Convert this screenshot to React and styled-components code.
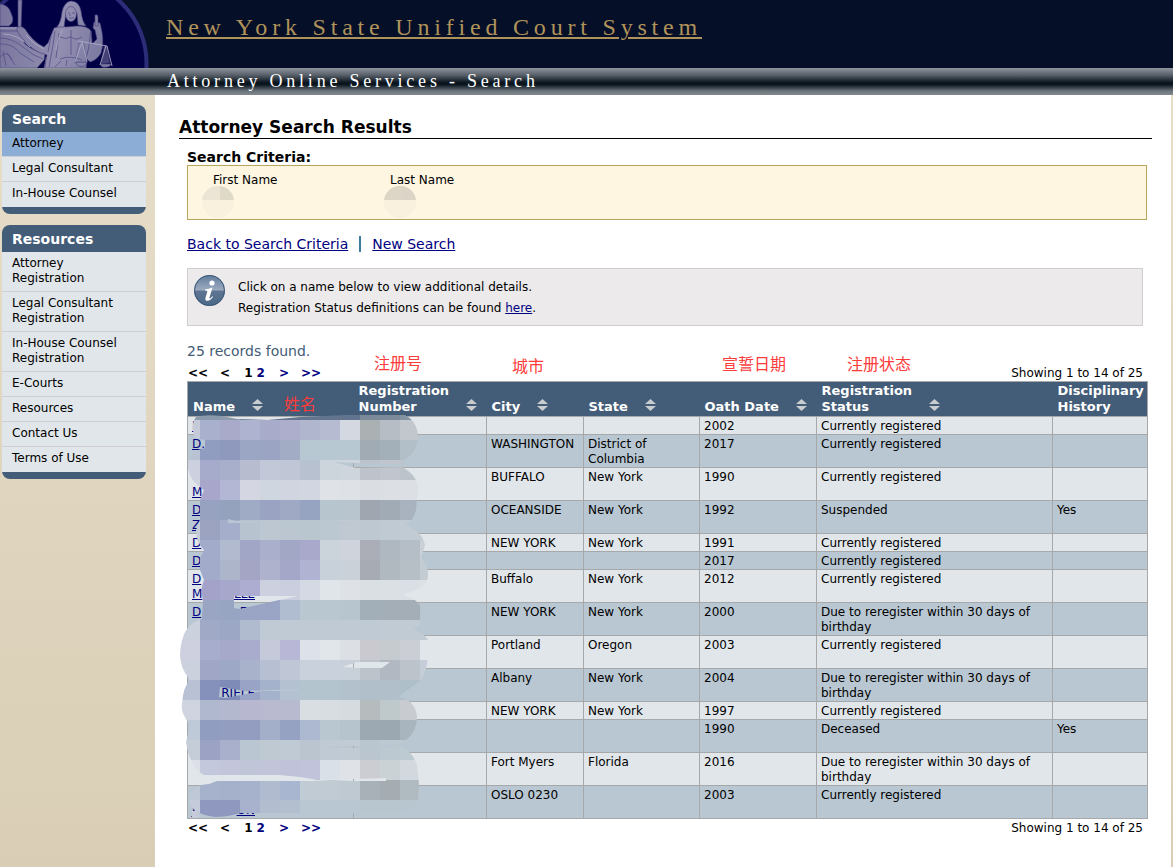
import React from 'react';
import styled, { createGlobalStyle } from 'styled-components';

const Global = createGlobalStyle`
  * { box-sizing: border-box; }
  body {
    margin: 0;
    background: linear-gradient(#e8dfcc, #d9ceb5);
    color: #000;
    font: 12px/15px "DejaVu Sans", sans-serif;
  }
  h1, h2, p, ul { margin: 0; padding: 0; }
  a { color: #000080; }
`;

const Page = styled.div`
  min-height: 100vh;
  display: flex;
  flex-direction: column;
`;
const Banner = styled.header`
  display: flex;
  align-items: flex-start;
  height: 68px;
  background: #050f28;
`;
const Seal = styled.svg`
  width: 150px;
  height: 68px;
  flex: none;
`;
const SiteTitle = styled.a`
  margin: 13px 0 0 16px;
  font: 24px/28px "Liberation Serif", serif;
  letter-spacing: 0.2em;
  color: #b0935a;
  text-decoration-thickness: 2px;
  text-underline-offset: 2px;
`;
const SubBanner = styled.div`
  height: 27px;
  padding-left: 167px;
  background: linear-gradient(#90959e 0, #5b626b 25%, #08131d 55%, #0c1720 62%, #6b737b 85%, #838a90 100%);
  color: #fff;
  font: 18px/27px "Liberation Serif", serif;
  letter-spacing: 0.21em;
`;
const Body = styled.div`
  flex: 1;
  display: flex;
  padding-right: 2px;
`;
const Sidebar = styled.nav`
  width: 155px;
  flex: none;
  padding: 10px 9px 0 2px;
  display: flex;
  flex-direction: column;
  gap: 11px;
`;
const Panel = styled.section`
  border-radius: 8px;
  overflow: hidden;
  background: #435c77;
  padding-bottom: 7px;
`;
const PanelTitle = styled.h2`
  padding: 1px 0 0 10px;
  color: #fff;
  font-size: 14px;
  line-height: 26px;
`;
const PanelList = styled.ul`
  list-style: none;
`;
const PanelLink = styled.a`
  display: block;
  padding: 4px 20px 5px 10px;
  border-bottom: 1px solid #d2cfd2;
  background: ${p => (p.$active ? '#8cadd5' : '#e1e6ea')};
  color: #000;
  text-decoration: none;
  li:last-child > & { border-bottom-color: #e1e6ea; }
`;
const Main = styled.main`
  flex: 1;
  min-width: 0;
  background: #fff;
  padding: 21px 19px 30px 24px;
`;
const Heading = styled.h1`
  padding-top: 1px;
  border-bottom: 1px solid #000;
  font-size: 17px;
  line-height: 21px;
`;
const Content = styled.div`
  padding: 11px 4px 0 8px;
`;
const CriteriaTitle = styled.h2`
  font-size: 14px;
  line-height: 15px;
`;
const Criteria = styled.div`
  display: grid;
  grid-template-columns: 177px 1fr;
  height: 55px;
  margin-right: 1px;
  padding: 7px 25px;
  border: 1px solid #b9a55c;
  background: #fff6e2;
`;
const Field = styled.div`
  position: relative;
`;
const Smudge = styled.svg`
  position: absolute;
  top: 13px;
  left: ${p => p.$left}px;
`;
const Links = styled.div`
  display: flex;
  align-items: center;
  gap: 11px;
  padding: 15px 0;
  font-size: 14px;
  line-height: 18px;
`;
const Divider = styled.span`
  width: 2px;
  height: 16px;
  background: #3c7c9c;
`;
const Notice = styled.div`
  display: flex;
  gap: 12px;
  height: 58px;
  margin-right: 5px;
  padding: 6px;
  border: 1px solid #d0cdd0;
  background: #eceaeb;
  line-height: 21px;
`;
const NoticeText = styled.div`
  padding-top: 2px;
`;
const Results = styled.section`
  position: relative;
  padding-top: 16px;
`;
const Count = styled.p`
  margin-bottom: 2px;
  color: #435c77;
  font-size: 14px;
  line-height: 18px;
`;
const PagerRow = styled.div`
  display: flex;
  justify-content: space-between;
  padding: ${p => (p.$below ? 2 : 4)}px 5px 0 1px;
`;
const Pager = styled.div`
  display: flex;
  gap: 12px;
  font-weight: bold;
  a { text-decoration: none; }
`;
const Numbers = styled.span`
  display: flex;
  gap: 4px;
  padding: 0 2px;
`;
const Grid = styled.table`
  width: 100%;
  table-layout: fixed;
  border-collapse: collapse;
  border: 1px solid #a6a8aa;
`;
const Th = styled.th`
  padding: 1px 0 1px 5px;
  background: #435c77;
  color: #fff;
  font-size: 13px;
  line-height: 16px;
  text-align: left;
  vertical-align: bottom;
`;
const SortButton = styled.button`
  display: flex;
  align-items: flex-end;
  gap: 17px;
  padding: 0;
  border: 0;
  background: none;
  color: inherit;
  font: inherit;
  text-align: left;
  svg { flex: none; margin-bottom: 4px; }
`;
const Row = styled.tr`
  background: ${p => (p.$dark ? '#b9c7d2' : '#e1e6ea')};
`;
const Td = styled.td`
  height: ${p => (p.$tall ? 33 : 18)}px;
  padding: 2px 4px 0;
  border: 1px solid #a6a8aa;
  vertical-align: top;
`;
const Name = styled.a`
  display: flex;
  justify-content: space-between;
  width: 63px;
  height: 15px;
`;
const TableWrap = styled.div`
  position: relative;
`;
const Mosaic = styled.svg`
  position: absolute;
  left: -7px;
  top: 19px;
  pointer-events: none;
`;
const Note = styled.span`
  position: absolute;
  left: ${p => p.$x}px;
  top: ${p => p.$y}px;
  color: #fc3b3b;
  font: 16px/20px "Noto Sans CJK SC", sans-serif;
`;

const searchLinks = ['Attorney', 'Legal Consultant', 'In-House Counsel'];
const resourceLinks = ['Attorney Registration', 'Legal Consultant Registration', 'In-House Counsel Registration', 'E-Courts', 'Resources', 'Contact Us', 'Terms of Use'];

const due = 'Due to reregister within 30 days of birthday';
const cur = 'Currently registered';
const NY = 'New York';
/* name lines, city, state, oath year, status, history, two-line row */
const rows = [
  [[['D']], '', '', '2002', cur, '', false],
  [[['D.']], 'WASHINGTON', 'District of Columbia', '2017', cur, '', true],
  [[[], ['M.']], 'BUFFALO', NY, '1990', cur, '', true],
  [[['D'], ['Z']], 'OCEANSIDE', NY, '1992', 'Suspended', 'Yes', true],
  [[['D']], 'NEW YORK', NY, '1991', cur, '', false],
  [[['D']], '', '', '2017', cur, '', false],
  [[['D'], ['M', 'ELLE']], 'Buffalo', NY, '2012', cur, '', true],
  [[['D', 'EE']], 'NEW YORK', NY, '2000', due, '', true],
  [[], 'Portland', 'Oregon', '2003', cur, '', true],
  [[[], ['', 'RIELE']], 'Albany', NY, '2004', due, '', true],
  [[], 'NEW YORK', NY, '1997', cur, '', false],
  [[], '', '', '1990', 'Deceased', 'Yes', true],
  [[], 'Fort Myers', 'Florida', '2016', due, '', true],
  [[[], ['J', 'ON']], 'OSLO 0230', '', '2003', cur, '', true],
];
const columns = [['Name', 166, true], ['Registration Number', 133, true], ['City', 97, true], ['State', 116, true], ['Oath Date', 117, true], ['Registration Status', 236, true], ['Disciplinary History', 95, false]];

/* one string per 20px band, thirteen 20px cells in each */
const cells = [
  '8b9bab 8998ab 8b9aab 66788f 62748e 62748e 62748e 62748e 62748e 7d8a99 7d8a99 8594a3 8594a3',
  'c5cad8 a9b0cd a9a9c9 aeb3d0 a9abca adadcc b1b6cf b7bbd1 d3d8e1 abb0b3 b6bdc4 c2c7cd c2c7cd',
  'b9c2d2 909cc0 8e99bd 9aa6c3 9ba4c3 a2adc5 b8c8d3 b8c8d3 b8c8d3 a0abb3 a3afb9 b2bec8 b2bec8',
  'cdd1df a6abcb a8afcb b7bccf c2c8d7 c1c6d6 b8c1d0 ccd4dc cfd5dd bec2cb c1c5cd bcc3cb bcc3cb',
  'd0d4df a8a6ca b3b7d4 d4d7e1 d0d6e0 d1d5e0 d2d6e1 dfe3e7 dee2e6 dadde1 dcdfe3 dce0e4 dce0e4',
  'b4bfd2 96a2c0 95a2be 9fabc5 9aa3c2 9fa9c4 96a4c2 b7c5cf b8c5cf 9fa6b0 a0abb5 a9b3bf a9b3bf',
  'c6cdd8 9ca3c1 a5aecb b7c3cf bdc7d1 bbc6d0 b9c5cf bcc8d1 c0c9d2 bdc8d0 bfcad2 c1cbd3 c1cbd3',
  'c4ccd8 a3abca b1bace a2a6c6 aaafcc a1a7c5 a8a9cb cbd3db cfd4dc abaeb6 afb7c0 b5bdc6 c9d0d8',
  'c4ccd8 a2abc9 adb5cb a4a5c5 afb2cd a5a7c9 b0b3d1 c8d0d9 cbd1d9 a7abb4 b0b8c0 b6bec6 c3cbd3',
  'c8c8dc a4a2c9 a7a7cb acadd0 ccd0df cbcedf d4d9e3 e0e5e9 dee2e6 dadfe3 dbe0e5 d9dfe4 dce1e6',
  'b5c0d0 99a5c2 98a5c2 9aa5c6 9aa5c6 b0bccf b9c7d1 b9c7d1 b7c5cf a3afb8 a3aeb7 a3aeb7 b7c5cf',
  'cbd1dd a0a9c5 9ba7c4 b0bbcf c0cad4 c0cad4 c0cad4 c0cad4 c0cad4 c0cad4 c0cbd4 c0cbd4 c0cbd4',
  'cfd0df a7aecd a7a9cb aaaccd c5c9da b8b8d6 dde1e9 e0e6ea dce0e4 cac9cf c6cbcf cbcfd5 e1e6ea',
  'cbd2dd 9fa6c6 9da8c6 a9b2cb b6c0d2 bfc6d5 c8d1dc c8d1dc c8d0da bdc3ca b2b8c1 bcc3cb c5ced8',
  'b9c1d5 8590bb 7e8bb7 98a3c6 a5b2cc b3c1d0 b4c4cf b4c4cf b3c1cc b0bfc9 b0bfc9 afbfc9 afbfc9',
  'd0d3e0 b0b8cf b4b8ce b7b8cf b9bacf b8bbd0 d9dee3 d8dde1 d5dbde b6bbbd bfc9cb c8ccd1 c8ccd1',
  'bfcad8 909dc0 929dbf 929dbf a3afc9 95a2c2 adb9d0 b9c7d0 b6c4cd 9ca9b3 9ba8b2 a8b4be a8b4be',
  'c5cdd9 9ba2c4 a8b0cb bac6d1 bec9d2 c0cad5 bac5d0 c0cad4 c1cbd4 bac5cf bdc9d1 bdcad1 bdcad1',
  'dcdfe8 c4c8dc c3c6db c0c5d8 c2c5d9 bfc2d8 c0c3d9 dae0e8 dfe3e8 cccdd2 cad2d6 d2d8dd d2d8dd',
  'bec8d6 a6b1cc a5b0cb a6b1cb b0bbcf a9b6cf c0cbd3 c0cbd3 bec9d2 a8b0b8 a5adb3 b0bac1 b0bac1',
  'c5cbda 8f99bf 8f99bf a8b2cd b2bdcf b3becf b8c7d1 b8c7d1 b8c7d1 b8c6d0 b8c6d0 b8c6d0 b8c6d0',
].map(r => r.split(' '));

const blob = 'M196 417 Q205 414 222 416 L237 419 268 420 300 417 345 415 405 415 Q418 422 418 438 Q416 454 404 460 L402 467 Q417 475 418 488 L416 510 Q413 522 405 525 Q422 531 425 545 L421 558 Q428 565 428 576 Q427 584 421 588 L403 595 Q422 600 423 614 Q422 626 413 629 Q424 633 428 640 L428 655 Q427 673 420 681 L398 697 Q415 700 417 716 Q417 732 406 740 L395 744 Q411 748 417 765 L419 785 Q418 798 418 801 Q412 812 395 813 L240 813 Q228 817 215 817 Q190 814 189 799 Q190 785 209 784 L217 781 313 781 350 780 318 780 300 777 280 775 204 775 Q190 768 186 742 L190 725 Q180 712 182 704 Q183 687 190 680 Q180 668 180 655 Q181 624 202 619 L203 600 201 590 204 580 200 570 200 558 204 550 Q196 542 196 530 L200 520 200 500 204 490 Q188 480 188 465 Q188 451 205 448 L205 440 195 438 Q190 425 196 417 Z';
const holes = 'M334 462 L358 463 398 464 408 467 356 468 Z M228 519 L236 521 340 522 354 524 236 523 228 523 Z M234 596 L298 596 270 602 240 609 234 608 Z M342 667 L357 662 390 662 382 668 357 668 Z M220 687 L245 691 298 689 298 691 262 691 225 698 219 697 Z M288 746 L320 747 395 745 396 748 340 748 Z M313 780 L356 779 386 778 386 781 356 781 Z M192 811 L199 811 199 818 192 818 Z';

function SortIcon() {
  return (
    <svg width="11" height="12" viewBox="0 0 11 12" aria-hidden="true">
      <path d="M5.500 0L11 5H0zM0 7H11L5.500 12z" fill="#c9cccf" />
    </svg>
  );
}

function SealArt() {
  return (
    <Seal viewBox="0 0 150 68" role="img" aria-label="Court seal">
      <defs>
        <linearGradient id="stone" gradientUnits="userSpaceOnUse" x1="0" x2="110" y1="0" y2="20">
          <stop offset="0" stopColor="#77739c" /><stop offset=".6" stopColor="#918eb0" /><stop offset="1" stopColor="#7b78a0" />
        </linearGradient>
      </defs>
      <circle cx="62" cy="63" r="86" fill="#020045" />
      <circle cx="62" cy="63" r="84.500" fill="none" stroke="#2c2c78" strokeWidth="4" />
      <g fill="url(#stone)" stroke="#46427c" strokeWidth=".6">
        <path d="M0 4Q9 5 11 13Q14 19 12 23L9 26H0z" />
        <path d="M18 0H22L21 30H18z" />
        <path d="M0 27H19L20 35 24 36 24 43Q31 50 45 54L44 60 37 68H0z" />
        <path d="M16 29Q20 24 25 29Q33 42 44 47L48 43 54 28Q61 25 66 27L77 26Q88 26 91 31L92 43 88 51 86 68H44L47 55Q32 52 21 37z" />
        <path d="M91 31L92 44 97 39 95 30 93 28 94 22 100 23 102 32Q104 44 101 53Q97 60 90 62L86 58 88 51z" />
        <path d="M57 27Q61 22 62 12Q64 2 71 1Q79 1 81 11Q82 21 86 26L78 25 77 13 66 13 64 27z" />
        <ellipse cx="71" cy="14" rx="5.500" ry="7.500" />
        <path d="M95 15Q98 14 98 17L98 26H95z" />
        <path d="M75 62H87Q86 68 78 66zM100 64H111Q110 68 102 67z" />
        <path d="M104 46H107L110 63 101 64z" opacity=".55" />
        <path d="M79 43L84 43 86 62H75z" opacity=".7" />
      </g>
      <g fill="none" stroke="#55518a" strokeWidth=".8">
        <path d="M0 31H18M0 38Q12 38 23 47Q33 56 43 59M0 44Q12 43 20 53L34 62M3 51L6 66M0 57Q8 49 12 60M7 53L15 65" />
        <path d="M55 31Q53 47 49 67M59 33L56 58M60 59Q70 55 82 60M55 67L61 61M66 66L67 60M60 37Q66 40 71 37Q76 41 82 37M71 30V55" />
        <path d="M68 13H70M72 13H75M69 18H74M70 14V16M51 36L48 52M46 57L45 67" />
      </g>
      <g fill="none" stroke="#aba8c6" strokeWidth=".9">
        <path d="M78 41L107 46M82 42L75 62M82 42L87 62M106 46L100 65M107 46L112 66M0 28H17M3 34Q18 34 30 47M26 35Q34 45 44 49M62 30Q57 40 56 50" />
      </g>
    </Seal>
  );
}

function InfoIcon() {
  return (
    <svg width="32" height="32" viewBox="0 0 32 32" role="img" aria-label="Information">
      <defs>
        <linearGradient id="ball" x1="0" x2="0" y1="0" y2="1">
          <stop offset="0" stopColor="#617c9c" /><stop offset=".47" stopColor="#9aaabf" /><stop offset=".53" stopColor="#5e7592" /><stop offset="1" stopColor="#4c6989" />
        </linearGradient>
      </defs>
      <circle cx="15.500" cy="15.500" r="15.500" fill="url(#ball)" />
      <circle cx="15.500" cy="15.500" r="15" fill="none" stroke="#3c5776" strokeWidth="1" />
      <circle cx="18" cy="8" r="2.600" fill="#fff" />
      <path d="M11 14.500Q15 14 18.500 12.500L15.500 22.500Q15.200 24 16.500 23.200L18.300 21.300 19 22Q16.500 25.700 13.500 25.800Q10.700 25.800 11.500 22.700L13.300 16.700Q13.500 15.500 11 15.500z" fill="#fff" />
    </svg>
  );
}

function HiddenValue({ left, colors }) {
  return (
    <Smudge $left={left} width="32" height="32" viewBox="0 0 32 32" aria-hidden="true">
      <circle cx="16" cy="16" r="16" fill="#f9f0de" />
      <path d="M0 14A16 16 0 0 1 18 0V14z" fill={colors[0]} />
      <path d="M18 0A16 16 0 0 1 32 14H18z" fill={colors[1]} />
    </Smudge>
  );
}

function PanelBlock({ title, links, active }) {
  return (
    <Panel>
      <PanelTitle>{title}</PanelTitle>
      <PanelList>
        {links.map(l => <li key={l}><PanelLink href="#" $active={l === active}>{l}</PanelLink></li>)}
      </PanelList>
    </Panel>
  );
}

function PagerBar({ below }) {
  return (
    <PagerRow $below={below}>
      <Pager>
        <span>&lt;&lt;</span><span>&lt;</span>
        <Numbers><span>1</span><a href="#">2</a></Numbers>
        <a href="#">&gt;</a><a href="#">&gt;&gt;</a>
      </Pager>
      <span>Showing 1 to 14 of 25</span>
    </PagerRow>
  );
}

export default function App() {
  return (
    <Page>
      <Global />
      <Banner>
        <SealArt />
        <SiteTitle href="#">New York State Unified Court System</SiteTitle>
      </Banner>
      <SubBanner>Attorney Online Services - Search</SubBanner>
      <Body>
        <Sidebar>
          <PanelBlock title="Search" links={searchLinks} active="Attorney" />
          <PanelBlock title="Resources" links={resourceLinks} />
        </Sidebar>
        <Main>
          <Heading>Attorney Search Results</Heading>
          <Content>
            <CriteriaTitle>Search Criteria:</CriteriaTitle>
            <Criteria>
              <Field>First Name<HiddenValue left={-11} colors={['#ece4d4', '#dfd9c7']} /></Field>
              <Field>Last Name<HiddenValue left={-6} colors={['#ddd5c5', '#dcd4c6']} /></Field>
            </Criteria>
            <Links>
              <a href="#">Back to Search Criteria</a>
              <Divider />
              <a href="#">New Search</a>
            </Links>
            <Notice>
              <InfoIcon />
              <NoticeText>
                <p>Click on a name below to view additional details.</p>
                <p>Registration Status definitions can be found <a href="#">here</a>.</p>
              </NoticeText>
            </Notice>
            <Results>
              <Count>25 records found.</Count>
              <PagerBar />
              <TableWrap>
                <Grid>
                  <colgroup>{columns.map(c => <col key={c[0]} style={{ width: c[1] }} />)}</colgroup>
                  <thead>
                    <tr>
                      {columns.map(([label, , sortable]) => {
                        const [a, b] = label === 'Oath Date' ? [label] : label.split(' ');
                        const text = <span>{a}{b && <><br />{b}</>}</span>;
                        return <Th key={label}>{sortable ? <SortButton>{text}<SortIcon /></SortButton> : text}</Th>;
                      })}
                    </tr>
                  </thead>
                  <tbody>
                    {rows.map(([names, city, state, year, status, history, tall], i) => (
                      <Row key={i} $dark={i % 2 === 1}>
                        <Td $tall={tall}>
                          {names.map((parts, n) => (
                            <Name key={n} href="#">{parts.map((t, k) => <span key={k}>{t}</span>)}</Name>
                          ))}
                        </Td>
                        <Td />
                        <Td>{city}</Td>
                        <Td>{state}</Td>
                        <Td>{year}</Td>
                        <Td>{status}</Td>
                        <Td>{history}</Td>
                      </Row>
                    ))}
                  </tbody>
                </Grid>
                <Mosaic width="260" height="420" viewBox="180 400 260 420" aria-hidden="true">
                  <clipPath id="smear"><path d={`${blob} ${holes}`} clipRule="evenodd" /></clipPath>
                  <g clipPath="url(#smear)" shapeRendering="crispEdges">
                    {cells.map((r, y) => r.map((c, x) => (
                      <rect key={`${x}-${y}`} x={180 + x * 20} y={400 + y * 20} width="20" height="20" fill={`#${c}`} />
                    )))}
                  </g>
                </Mosaic>
              </TableWrap>
              <PagerBar below />
              <Note $x={187} $y={26}>注册号</Note>
              <Note $x={325} $y={29}>城市</Note>
              <Note $x={535} $y={27}>宣誓日期</Note>
              <Note $x={660} $y={27}>注册状态</Note>
              <Note $x={97} $y={67}>姓名</Note>
            </Results>
          </Content>
        </Main>
      </Body>
    </Page>
  );
}
